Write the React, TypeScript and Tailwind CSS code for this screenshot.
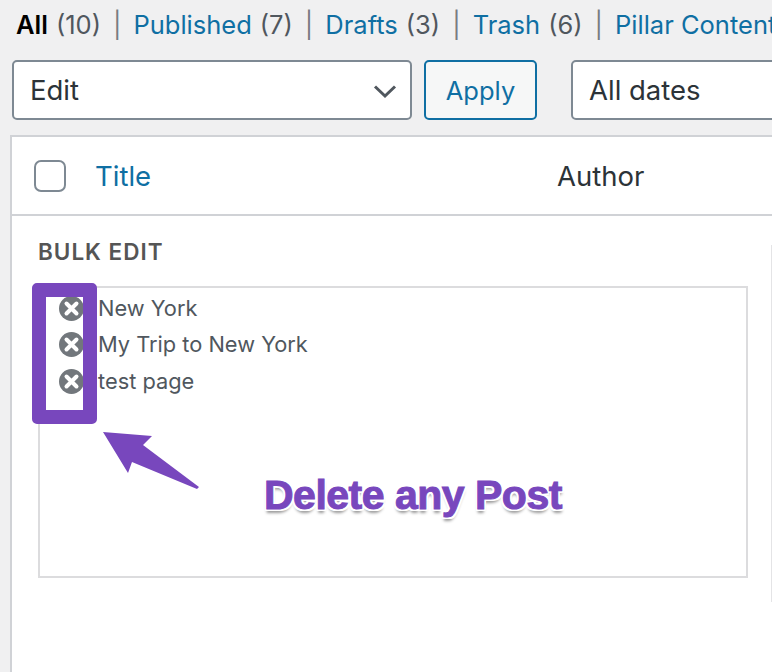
import React from 'react';

const Sep = () => <span className="mx-3 text-[#787c82]">|</span>;

const Chevron = () => (
  <svg width="24" height="24" viewBox="0 0 24 24" className="text-[#50575e]">
    <path d="M2 7.5 L12 17 L22 7.5" fill="none" stroke="currentColor" strokeWidth="3" />
  </svg>
);

const RemoveIcon = () => (
  <svg width="25" height="25" viewBox="0 0 25 25" className="shrink-0">
    <circle cx="12.5" cy="12.5" r="12.5" fill="#72777c" />
    <path d="M7.5 7.5 L17.5 17.5 M17.5 7.5 L7.5 17.5" stroke="#fff" strokeWidth="4" strokeLinecap="round" />
  </svg>
);

const posts = ['New York', 'My Trip to New York', 'test page'];

export default function App() {
  return (
    <div className="relative w-[772px] h-[672px] overflow-hidden bg-[#f0f0f1] font-['Inter','Liberation_Sans',sans-serif] text-[#50575e]">
      <div className="flex h-[50px] items-center pl-4 text-[25.5px] whitespace-nowrap">
        <span className="font-semibold text-black">All</span>
        <span className="ml-2">(10)</span>
        <Sep />
        <span className="text-[#0f6fa3]">Published</span>
        <span className="ml-2">(7)</span>
        <Sep />
        <span className="text-[#0f6fa3]">Drafts</span>
        <span className="ml-2">(3)</span>
        <Sep />
        <span className="text-[#0f6fa3]">Trash</span>
        <span className="ml-2">(6)</span>
        <Sep />
        <span className="text-[#0f6fa3]">Pillar Content</span>
      </div>

      <div className="mt-[10px] flex h-[60px] pl-3">
        <div className="flex w-[400px] shrink-0 items-center justify-between rounded-[5px] border-2 border-[#7e8993] bg-white pl-4 pr-[13px] pt-[2px] text-[27.5px] text-[#2c3338]">
          Edit
          <Chevron />
        </div>
        <div className="ml-3 flex w-[113px] shrink-0 items-center justify-center rounded-[5px] border-2 border-[#0f6fa3] bg-[#f6f7f7] pt-[2px] text-[25.5px] text-[#0f6fa3]">
          Apply
        </div>
        <div className="ml-[34px] flex w-[300px] shrink-0 items-center rounded-l-[5px] border-2 border-[#7e8993] bg-white pl-4 pt-[2px] text-[27.5px] text-[#2c3338]">
          All dates
        </div>
      </div>

      <div className="ml-[10px] mt-[15px] h-[540px] border-l-2 border-t-2 border-[#d0d2d6] bg-white">
        <div className="flex h-[79px] items-center border-b-2 border-[#d0d2d6] pt-[2px] text-[27.5px]">
          <div className="ml-[22px] -mt-[2px] h-8 w-8 rounded-[7px] border-2 border-[#7e8993] bg-white" />
          <span className="ml-[29px] w-[462px] text-[#0f6fa3]">Title</span>
          <span className="text-[#2c3338]">Author</span>
        </div>
        <div className="px-[26px] pt-[22px]">
          <div className="text-[22.5px] font-semibold leading-[28px] tracking-[1px] text-[#555]">BULK EDIT</div>
          <div className="mt-5 h-[292px] w-[710px] border-2 border-[#dcdcde] pl-[19px] pt-[2px]">
            {posts.map((post) => (
              <div key={post} className="flex h-[36.5px] items-center text-[21.8px] text-[#50575e]">
                <RemoveIcon />
                <span className="ml-[14px]">{post}</span>
              </div>
            ))}
          </div>
        </div>
      </div>

      {/* next row's edge peeks in on the right */}
      <div className="absolute left-[771px] top-[245px] h-[357px] w-px bg-[#e4e4e6]" />

      {/* annotation overlay */}
      <div className="absolute left-[32px] top-[283px] h-[141px] w-[65px] rounded-[5px] border-[14px] border-[#7847bd]" />
      <svg className="absolute left-[100px] top-[425px]" width="105" height="70" viewBox="0 0 105 70">
        <path d="M3 7 L52 11 L43 20 L99 62 L97 64 L32 37 L28 48 Z" fill="#7847bd" />
      </svg>
      <div className="absolute left-[264px] top-[471px] text-[41px] font-bold leading-[48px] tracking-[-0.5px] whitespace-nowrap font-['Liberation_Sans',sans-serif] text-[#7847bd] [-webkit-text-stroke:1px_#7847bd] [text-shadow:2px_0_0_#fff,-2px_0_0_#fff,0_2px_0_#fff,0_-2px_0_#fff,2px_2px_0_#fff,-2px_2px_0_#fff,2px_-2px_0_#fff,-2px_-2px_0_#fff,0_4px_3px_#999]">
        Delete any Post
      </div>
    </div>
  );
}
